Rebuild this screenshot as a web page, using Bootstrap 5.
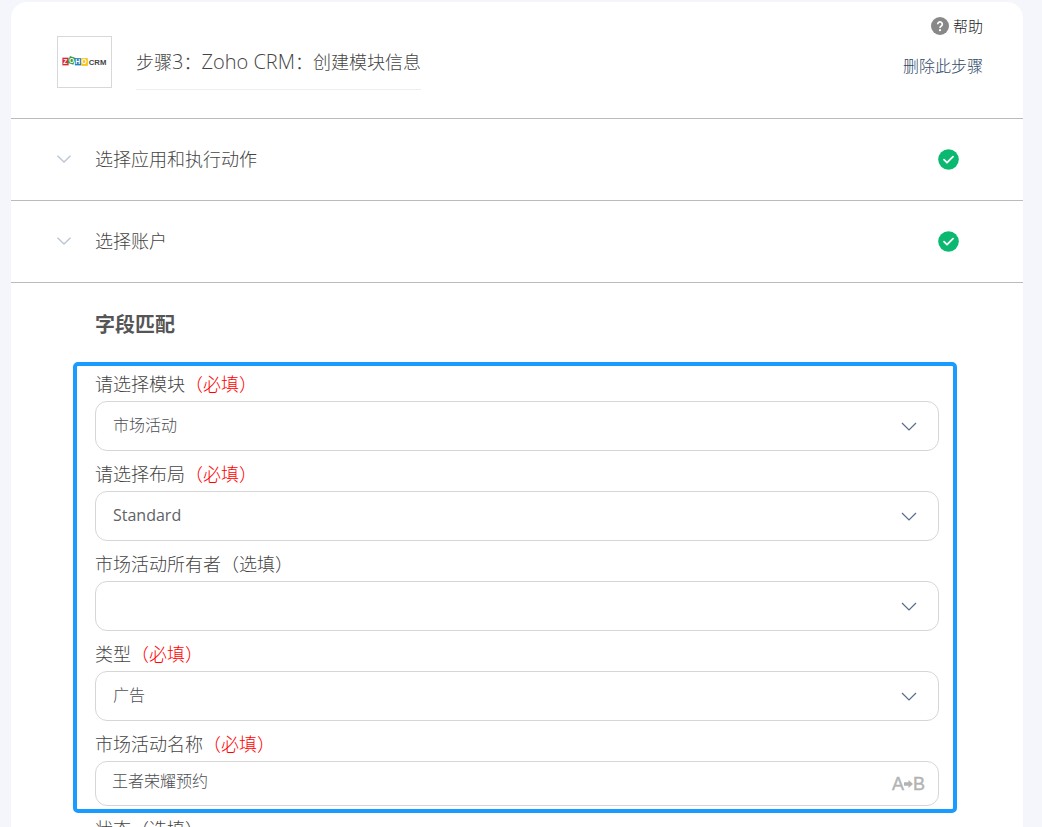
<!DOCTYPE html>
<html lang="zh-CN">
<head>
<meta charset="utf-8">
<meta name="viewport" content="width=device-width, initial-scale=1">
<title>步骤3：Zoho CRM</title>
<link href="https://cdn.jsdelivr.net/npm/bootstrap@5.3.0/dist/css/bootstrap.min.css" rel="stylesheet">
<style>
  html { scrollbar-width: none; }
  body {
    background: #f5f6fb;
    color: #444;
    font-family: "Open Sans", "Noto Sans CJK SC", sans-serif;
    font-size: 18px;
    font-weight: 300;
    line-height: 24px;
    padding: 2px 19px 0 11px;
  }
  .step-panel { background: #fff; border-radius: 16px; min-height: 100vh; }
  .step-head { border-bottom: 1px solid #bbb; padding: 12px 40px 28px 46px; }
  .app-logo { width: 55px; height: 52px; border: 1px solid #d8d8d8; margin-top: 22px; }
  .step-title { font-size: 18px; font-weight: 300; line-height: 24px; margin: 36px 0 0; padding-bottom: 15px; border-bottom: 1px solid #eee; }
  .step-title .latin { font-size: 20px; line-height: 20px; }
  .help-link { color: #222; font-size: 15px; text-decoration: none; }
  .delete-link { color: #2f4868; font-size: 16px; text-decoration: none; }
  .stage { background: none; border: 0; border-bottom: 1px solid #bbb; height: 82px; padding: 0 64px 1px 46px; color: inherit; font-weight: inherit; }
  .stage-name { margin-left: 24px; }
  .match-title { color: #555; font-size: 20px; font-weight: 700; line-height: 28px; margin: 28px 84px 23px; }
  .field-frame { border: 4px solid #1a9bff; border-radius: 5px; margin: 0 66px 0 62px; padding: 2px 14px 3px 18px; }
  .after-frame { margin: 0 84px; }
  .field-label { display: block; height: 33px; line-height: 33px; }
  .field-gap { margin-bottom: 7px; }
  .required { color: #f00; }
  .field-control, .field-control:focus {
    border: 1px solid #d6d6d6; border-radius: 12px; background-color: #fff;
    color: #4c4e52; font-size: 16px; font-weight: 300; padding: 0 17px 2px; box-shadow: none;
  }
  select.field-control { height: 50px;
    background-image: url("data:image/svg+xml,%3csvg xmlns='http://www.w3.org/2000/svg' viewBox='0 0 16 9' fill='none' stroke='%23576b8c' stroke-width='1.2'%3e%3cpath d='M1 1l7 7 7-7'/%3e%3c/svg%3e");
    background-size: 16px 9px; background-position: right 21px center; }
  select.field-control.latin { font-weight: 400; color: #606266; }
  input.field-control { height: 45px; padding: 0 60px 7px 16px; }
  .map-btn { right: 14px; top: 12px; color: #b3b3b3; font: 400 18px/22px "Liberation Sans", sans-serif; -webkit-text-stroke: .4px; }
</style>
<script src="https://cdn.jsdelivr.net/npm/bootstrap@5.3.0/dist/js/bootstrap.bundle.min.js"></script>
</head>
<body>
<main class="step-panel">
  <header class="step-head d-flex align-items-start">
    <svg class="app-logo flex-shrink-0" viewBox="0 0 55 52" role="img" aria-label="Zoho CRM">
      <g font-family="Liberation Sans, sans-serif" font-weight="700" font-size="7" fill="#fff">
        <rect x="4.500" y="21.500" width="6.500" height="8" fill="#d9282c"/>
        <rect x="11" y="20.500" width="6.500" height="7.500" fill="#3a9f4b" transform="rotate(20 14 24)"/>
        <rect x="17.500" y="22" width="6.500" height="7.500" fill="#1c82c9"/>
        <rect x="24" y="22" width="7" height="8" fill="#f8c41c"/>
        <text x="5.500" y="28">Z</text><text x="11.500" y="27">O</text><text x="18" y="28">H</text><text x="24.500" y="28">O</text>
        <text x="32" y="29" font-size="8" fill="#444">CRM</text>
      </g>
    </svg>
    <h1 class="step-title ms-4">步骤<span class="latin">3</span>：<span class="latin">Zoho CRM</span>：创建模块信息</h1>
    <nav class="ms-auto d-flex flex-column align-items-end gap-3 text-nowrap">
      <a class="help-link d-flex align-items-center gap-1" href="#help">
        <svg width="18" height="18" viewBox="0 0 18 18" aria-hidden="true"><circle cx="9" cy="9" r="9" fill="#888"/><path d="M6.700 7.200a2.300 2.300 0 1 1 3.600 1.900Q9 9.800 9 11" fill="none" stroke="#fff" stroke-width="1.700"/><circle cx="9" cy="13.200" r="1.100" fill="#fff"/></svg>帮助</a>
      <a class="delete-link" href="#delete">删除此步骤</a>
    </nav>
  </header>

  <button type="button" class="stage w-100 d-flex align-items-center text-start">
    <svg width="14" height="8" viewBox="0 0 14 8" fill="none" stroke="#bcc8d6" stroke-width="1.500" aria-hidden="true"><path d="M.5.7 7 7 13.500.7"/></svg>
    <span class="stage-name flex-grow-1">选择应用和执行动作</span>
    <svg width="21" height="21" viewBox="0 0 21 21" aria-label="已完成"><circle cx="10.500" cy="10.500" r="10.300" fill="#0bb870"/><path d="M6 10.700l3 3 6-6" fill="none" stroke="#fff" stroke-width="1.800" stroke-linecap="round" stroke-linejoin="round"/></svg>
  </button>
  <button type="button" class="stage w-100 d-flex align-items-center text-start">
    <svg width="14" height="8" viewBox="0 0 14 8" fill="none" stroke="#bcc8d6" stroke-width="1.500" aria-hidden="true"><path d="M.5.7 7 7 13.500.7"/></svg>
    <span class="stage-name flex-grow-1">选择账户</span>
    <svg width="21" height="21" viewBox="0 0 21 21" aria-label="已完成"><circle cx="10.500" cy="10.500" r="10.300" fill="#0bb870"/><path d="M6 10.700l3 3 6-6" fill="none" stroke="#fff" stroke-width="1.800" stroke-linecap="round" stroke-linejoin="round"/></svg>
  </button>

  <form>
    <h2 class="match-title">字段匹配</h2>
    <div class="field-frame">
      <div class="field-gap">
        <label class="field-label" for="module">请选择模块<span class="required">（必填）</span></label>
        <select class="form-select field-control" id="module"><option>市场活动</option></select>
      </div>
      <div class="field-gap">
        <label class="field-label" for="layout">请选择布局<span class="required">（必填）</span></label>
        <select class="form-select field-control latin" id="layout"><option>Standard</option></select>
      </div>
      <div class="field-gap">
        <label class="field-label" for="owner">市场活动所有者（选填）</label>
        <select class="form-select field-control" id="owner"><option></option></select>
      </div>
      <div class="field-gap">
        <label class="field-label" for="type">类型<span class="required">（必填）</span></label>
        <select class="form-select field-control" id="type"><option>广告</option></select>
      </div>
      <div>
        <label class="field-label" for="name">市场活动名称<span class="required">（必填）</span></label>
        <div class="position-relative">
          <input class="form-control field-control" id="name" type="text" value="王者荣耀预约">
          <button type="button" class="map-btn btn p-0 border-0 position-absolute d-flex align-items-center">A<svg width="9" height="8" viewBox="0 0 9 8" fill="currentColor" aria-hidden="true"><path d="M0 2.300h4.500V0L9 4 4.500 8V5.700H0z"/></svg>B</button>
        </div>
      </div>
    </div>
    <div class="after-frame">
      <label class="field-label" for="status">状态（选填）</label>
      <select class="form-select field-control" id="status"><option></option></select>
    </div>
  </form>
</main>
</body>
</html>
